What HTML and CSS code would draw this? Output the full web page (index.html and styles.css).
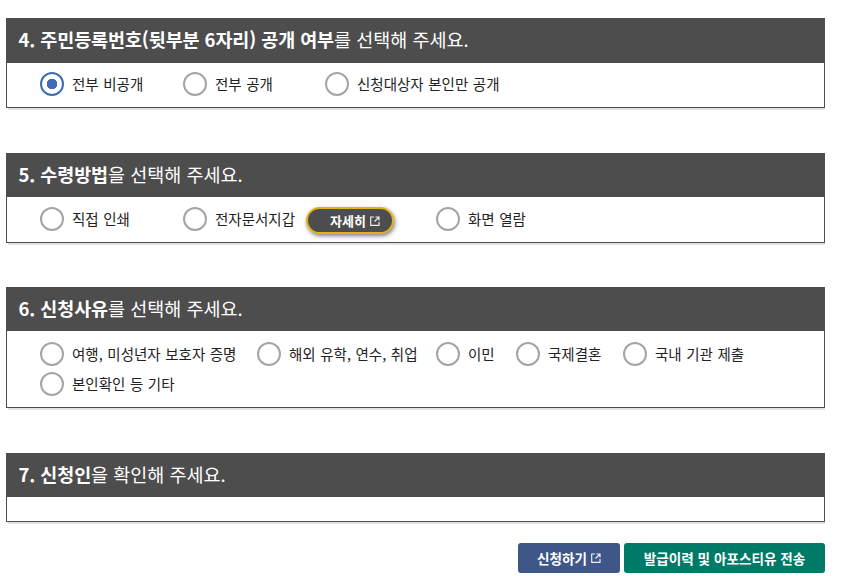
FILE: index.html
```html
<!DOCTYPE html>
<html lang="ko">
<head>
<meta charset="utf-8">
<title>신청</title>
<link rel="stylesheet" href="styles.css">
</head>
<body>
<main class="page">
  <section class="panel panel-4">
    <h2 class="head"><b>4. 주민등록번호(뒷부분 6자리) 공개 여부</b>를 선택해 주세요.</h2>
    <div class="body">
      <div class="opts">
        <label class="opt w143"><span class="radio on"></span><span class="txt">전부 비공개</span></label>
        <label class="opt w142"><span class="radio"></span><span class="txt">전부 공개</span></label>
        <label class="opt"><span class="radio"></span><span class="txt">신청대상자 본인만 공개</span></label>
      </div>
    </div>
  </section>
  <section class="panel panel-5">
    <h2 class="head"><b>5. 수령방법</b>을 선택해 주세요.</h2>
    <div class="body">
      <div class="opts">
        <label class="opt w143"><span class="radio"></span><span class="txt">직접 인쇄</span></label>
        <label class="opt w253"><span class="radio"></span><span class="txt">전자문서지갑</span>
          <span class="more">자세히<svg class="ext" viewBox="0 0 10 10"><path d="M4 1H.7v8.300H9V6M5.500 1H9v3.500M9 1 4.500 5.500" fill="none" stroke="currentColor" stroke-width="1.200"/></svg></span></label>
        <label class="opt"><span class="radio"></span><span class="txt">화면 열람</span></label>
      </div>
    </div>
  </section>
  <section class="panel panel-6">
    <h2 class="head"><b>6. 신청사유</b>를 선택해 주세요.</h2>
    <div class="body">
      <div class="opts wrap">
        <label class="opt w217"><span class="radio"></span><span class="txt">여행, 미성년자 보호자 증명</span></label>
        <label class="opt w179"><span class="radio"></span><span class="txt">해외 유학, 연수, 취업</span></label>
        <label class="opt w80"><span class="radio"></span><span class="txt">이민</span></label>
        <label class="opt w107"><span class="radio"></span><span class="txt">국제결혼</span></label>
        <label class="opt w150"><span class="radio"></span><span class="txt">국내 기관 제출</span></label>
        <label class="opt w217"><span class="radio"></span><span class="txt">본인확인 등 기타</span></label>
      </div>
    </div>
  </section>
  <section class="panel panel-7">
    <h2 class="head"><b>7. 신청인</b>을 확인해 주세요.</h2>
    <div class="body empty"></div>
  </section>
  <div class="actions">
    <a class="btn blue">신청하기<svg class="ext" viewBox="0 0 10 10"><path d="M4 1H.7v8.300H9V6M5.500 1H9v3.500M9 1 4.500 5.500" fill="none" stroke="currentColor" stroke-width="1.200"/></svg></a>
    <a class="btn green">발급이력 및 아포스티유 전송</a>
  </div>
</main>
</body>
</html>
```
FILE: styles.css
```css
* { box-sizing: border-box; }
html, body { margin: 0; background: #fff; }
body { font-family: "Noto Sans CJK KR", "Noto Sans", sans-serif; color: #222; }
.page { width: 819px; margin-left: 6px; padding-top: 18px; }
.panel { box-shadow: 1px 3px 0 -1px #e2e2e2; }
.panel-4 { margin-bottom: 45px; }
.panel-5 { margin-bottom: 44px; }
.panel-6 { margin-bottom: 45px; }
.head {
  margin: 0;
  height: 45px;
  padding-left: 12.500px;
  background: #4d4d4d;
  color: #fff;
  font-size: 18.5px;
  font-weight: 400;
  line-height: 43px;
}
.panel-5 .head, .panel-6 .head, .panel-7 .head { height: 44px; }
.head b { font-weight: 700; letter-spacing: -0.1px; }
.body {
  height: 45px;
  border: 1px solid #4d4d4d;
  border-top: 0;
  padding: 9px 0 0 33px;
}
.body.empty { height: 25px; padding: 0; }
.panel-5 .body { height: 46px; padding-top: 10px; }
.panel-6 .body { height: 77px; padding-top: 11px; }
.opts { display: flex; align-items: center; }
.opts.wrap { flex-wrap: wrap; row-gap: 6px; }
.opt { display: flex; align-items: center; height: 24px; font-size: 14.5px; word-spacing: 0.500px; flex: none; }
.w143 { width: 143px; }
.w142 { width: 142px; }
.w253 { width: 253px; }
.w217 { width: 217px; }
.w179 { width: 179px; }
.w80 { width: 80px; }
.w107 { width: 107px; }
.w150 { width: 150px; }
.radio {
  flex: none;
  width: 24px;
  height: 24px;
  margin-right: 8px;
  border: 2px solid #a5a5a5;
  border-radius: 50%;
  background: #fff;
}
.radio.on {
  border-color: #3f6db5;
  background: radial-gradient(circle, #3f6db5 0 5px, #fff 5.500px);
}
.txt { line-height: 24px; padding-bottom: 1px; white-space: nowrap; }
.more {
  display: inline-flex;
  align-items: center;
  gap: 4px;
  width: 88px;
  height: 27px;
  margin: 3px 0 0 11px;
  padding-left: 22px;
  border: 2px solid #e0b31c;
  border-radius: 14px;
  background: #4d4d4d;
  color: #fff;
  font-size: 13px;
  font-weight: 700;
  box-shadow: 1px 2px 4px rgba(0,0,0,.5);
}
.ext { width: 10px; height: 10px; flex: none; opacity: .9; }
.actions { display: flex; justify-content: flex-end; gap: 4px; margin-top: 21px; }
.btn {
  display: flex;
  align-items: center;
  justify-content: center;
  gap: 4px;
  height: 30px;
  border-radius: 3px;
  color: #fff;
  font-size: 13.600px;
  font-weight: 700;
}
.blue { width: 102px; background: #3e5788; }
.green { width: 201px; background: #007a68; }
```
